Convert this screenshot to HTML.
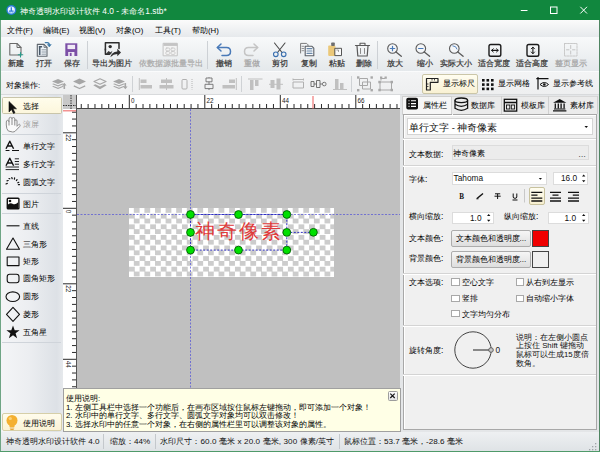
<!DOCTYPE html>
<html><head><meta charset="utf-8"><style>
*{margin:0;padding:0;box-sizing:border-box}
body{width:600px;height:452px;overflow:hidden;position:relative;background:#f0f0f0;font-family:"Liberation Sans",sans-serif;font-size:7.8px;color:#000;font-weight:normal}
.tb{font-weight:bold;color:#4a4a4a}
.a{position:absolute}
.t{position:absolute;white-space:nowrap;line-height:10px;height:10px}
svg{position:absolute;overflow:visible}
</style></head><body>
<!-- title bar -->
<div class="a" style="left:0;top:0;width:600px;height:20px;background:#11873e"></div>

<div class="t" style="left:20px;top:5.5px;color:#fff;font-size:8.35px;font-weight:normal">神奇透明水印设计软件 4.0 - 未命名1.stb*</div>
<svg width="600" height="452" style="left:0;top:0" fill="none">
 <circle cx="11.3" cy="10" r="5" fill="#2a7ad8"/>
 <circle cx="11.3" cy="10" r="3.6" fill="#eaf6ff"/>
 <path d="M11.3 7.2 V10.5 M9 11.2 H13.6" stroke="#2a7ad8" stroke-width="1.3"/>
 <path d="M8.5 12 Q11.3 14 14.1 12" stroke="#7ab8f0" stroke-width="0.8"/>
 <path d="M520.8 10.5 H527.5" stroke="#fff" stroke-width="1"/>
 <rect x="550.5" y="7" width="6.5" height="6.5" stroke="#fff" stroke-width="1"/>
 <path d="M580.3 6.8 L587 13.5 M587 6.8 L580.3 13.5" stroke="#fff" stroke-width="1"/>
</svg>
<!-- window frame -->
<div class="a" style="left:0;top:20px;width:1px;height:432px;background:#6fa585"></div>
<div class="a" style="left:599px;top:20px;width:1px;height:432px;background:#4f8562"></div>
<div class="a" style="left:0;top:451px;width:600px;height:1px;background:#4f9a6a"></div>
<!-- menu bar -->
<div class="a" style="left:1px;top:20px;width:598px;height:17px;background:linear-gradient(#fbfbfb,#e6e9ec)"></div>
<div class="t" style="left:7px;top:25.5px;font-weight:normal;color:#000">文件(F)</div>
<div class="t" style="left:43px;top:25.5px;font-weight:normal;color:#000">编辑(E)</div>
<div class="t" style="left:79px;top:25.5px;font-weight:normal;color:#000">视图(V)</div>
<div class="t" style="left:116px;top:25.5px;font-weight:normal;color:#000">对象(O)</div>
<div class="t" style="left:155px;top:25.5px;font-weight:normal;color:#000">工具(T)</div>
<div class="t" style="left:192px;top:25.5px;font-weight:normal;color:#000">帮助(H)</div>
<!-- toolbar -->
<div class="a" style="left:1px;top:37px;width:598px;height:34px;background:linear-gradient(#f8f9fa,#e4e8eb)"></div>
<div class="a" style="left:1px;top:71px;width:598px;height:1px;background:#fafbfc"></div>

<!-- toolbar labels -->
<div class="t tb" style="left:8px;top:59px">新建</div>
<div class="t tb" style="left:36px;top:59px">打开</div>
<div class="t tb" style="left:64px;top:59px">保存</div>
<div class="t tb" style="left:92px;top:59px">导出为图片</div>
<div class="t tb" style="left:138.5px;top:59px;color:#b0b0b0">依数据源批量导出</div>
<div class="t tb" style="left:215.5px;top:59px">撤销</div>
<div class="t tb" style="left:243.5px;top:59px;color:#a8a8a8">重做</div>
<div class="t tb" style="left:272px;top:59px">剪切</div>
<div class="t tb" style="left:300.5px;top:59px">复制</div>
<div class="t tb" style="left:328.5px;top:59px">粘贴</div>
<div class="t tb" style="left:355.5px;top:59px">删除</div>
<div class="t tb" style="left:386.5px;top:59px">放大</div>
<div class="t tb" style="left:417px;top:59px">缩小</div>
<div class="t tb" style="left:440px;top:59px">实际大小</div>
<div class="t tb" style="left:478px;top:59px">适合宽度</div>
<div class="t tb" style="left:515.5px;top:59px">适合高度</div>
<div class="t tb" style="left:555px;top:59px;color:#a8a8a8">整页显示</div>
<div class="a" style="left:87px;top:41px;width:1px;height:28px;background:#cdd1d5"></div>
<div class="a" style="left:207px;top:41px;width:1px;height:28px;background:#cdd1d5"></div>
<div class="a" style="left:377px;top:41px;width:1px;height:28px;background:#cdd1d5"></div>
<svg width="600" height="452" style="left:0;top:0" fill="none" stroke-linejoin="round" stroke-linecap="round">
 <!-- new -->
 <path d="M9.8 43.5 H17 L21 47.5 V55 H9.8 Z" stroke="#6a6a6a" stroke-width="1.1"/>
 <path d="M17 43.5 V47.5 H21" stroke="#6a6a6a" stroke-width="1"/>
 <path d="M20.5 52.5 V57 M18.3 54.8 H22.8" stroke="#2a9a8a" stroke-width="1.1"/>
 <!-- open -->
 <path d="M37.3 44.4 H44 L47 47.4 V56.3 H37.3 Z" stroke="#5f666d" stroke-width="1.1" fill="#eef3f8"/>
 <path d="M44 44.4 V47.4 H47" stroke="#5f666d" stroke-width="0.8"/>
 <rect x="38.9" y="46" width="1.6" height="9" fill="#4a5a6a"/>
 <rect x="38.9" y="46" width="3.2" height="1.5" fill="#4a5a6a"/>
 <path d="M42 49.8 H45.8 M42 52 H45.8 M42 54.2 H45.8" stroke="#7a8590" stroke-width="0.8"/>
 <path d="M45.3 42.6 H47.3 Q49.3 42.6 49.3 45" stroke="#3d78a8" stroke-width="1.3"/>
 <path d="M47.6 44.8 L49.3 46.9 L51 44.8 Z" fill="#3d78a8" stroke="#3d78a8" stroke-width="0.6"/>
 <!-- save -->
 <path d="M65.3 43.3 H77.3 V56 H65.3 Z" fill="#7b4fa6"/>
 <rect x="67.5" y="44.8" width="7.6" height="4.3" fill="#f0eaf5"/>
 <rect x="68.2" y="52" width="6.2" height="4" fill="#f0eaf5"/>
 <rect x="69.8" y="52.8" width="1.8" height="3.2" fill="#7b4fa6"/>
 <!-- export image -->
 <path d="M105.4 50 V42.8 H119 V48.5" stroke="#2e2e2e" stroke-width="1.5"/>
 <path d="M105.4 49 V54.3 H109.5" stroke="#2e2e2e" stroke-width="1.5"/>
 <circle cx="110.2" cy="46.6" r="1.7" fill="#2e2e2e"/>
 <path d="M105.8 54 L108.5 51 L110.5 52.2 L112.5 50.8 L111 54.3 Z" fill="#3a3a3a"/>
 <path d="M110.3 57.3 Q111.5 51.8 117.3 51.4 V48.8 L121 52.5 L117.3 56.2 V54 Q113.5 54 110.3 57.3 Z" fill="#2e2e2e"/>
 <!-- batch export disabled -->
 <rect x="163.5" y="43.3" width="13.8" height="12.5" stroke="#c4c4c4" stroke-width="1" fill="#f4f4f4"/>
 <rect x="163.5" y="43.3" width="13.8" height="2.6" fill="#c4c4c4"/>
 <g stroke="#c4c4c4" stroke-width="0.8" fill="none">
  <rect x="165.8" y="48" width="4" height="2.8" rx="1"/><rect x="171" y="48" width="4" height="2.8" rx="1"/>
  <rect x="165.8" y="51.6" width="4" height="2.8" rx="1"/><rect x="171" y="51.6" width="4" height="2.8" rx="1"/>
 </g>
 <!-- undo -->
 <path d="M217.5 47.5 H226.5 Q230.5 47.5 230.5 51.5 Q230.5 55.5 226.5 55.5 H222" stroke="#4a7ab8" stroke-width="1.5"/>
 <path d="M221 44 L217.3 47.5 L221 51" stroke="#4a7ab8" stroke-width="1.5"/>
 <!-- redo disabled -->
 <path d="M257.5 47.5 H248.5 Q244.5 47.5 244.5 51.5 Q244.5 55.5 248.5 55.5 H253" stroke="#c4c4c4" stroke-width="1.5"/>
 <path d="M254 44 L257.7 47.5 L254 51" stroke="#c4c4c4" stroke-width="1.5"/>
 <!-- scissors -->
 <path d="M274.5 43 L282 52.5 M285 43 L277.5 52.5" stroke="#4a4a4a" stroke-width="1.1"/>
 <circle cx="275.8" cy="54.3" r="2.3" stroke="#3a70b0" stroke-width="1.1"/>
 <circle cx="283.7" cy="54.3" r="2.3" stroke="#3a70b0" stroke-width="1.1"/>
 <!-- copy -->
 <path d="M300.6 53 V43.4 H306.6 L308 44.8 V45.8" stroke="#7a7a7a" stroke-width="1"/>
 <path d="M302 46.3 H303.8 M302 48.5 H303.8 M302 50.7 H303.8" stroke="#8a8a8a" stroke-width="0.9"/>
 <path d="M305.2 46.3 H312 L313.8 48.1 V55.8 H305.2 Z" stroke="#5a5f66" stroke-width="1.1" fill="#f6f8fa"/>
 <path d="M307 48.6 H312 M307 51 H312 M307 53.4 H312" stroke="#6a88a8" stroke-width="1.1"/>
 <!-- paste -->
 <rect x="328.2" y="45.6" width="7.2" height="10.3" rx="0.8" fill="#ebc879"/>
 <rect x="331.2" y="42.6" width="3.6" height="3.3" rx="0.6" fill="#6e6e6e"/>
 <path d="M335.2 48.3 H341.5 V55.6 H335.2 Z" fill="#fafafa" stroke="#555" stroke-width="1"/>
 <path d="M336.8 50 H338.5 V51.5" stroke="#888" stroke-width="0.8"/>
 <!-- delete -->
 <path d="M355.5 45.5 H369.5" stroke="#5a5a5a" stroke-width="1.2"/>
 <path d="M360 45.5 V43.3 H365 V45.5" stroke="#5a5a5a" stroke-width="1.1"/>
 <path d="M357 46 L357.8 56 H367.2 L368 46" stroke="#5a5a5a" stroke-width="1.2"/>
 <path d="M360.5 48.5 V53.5 M364.5 48.5 V53.5" stroke="#8a8a8a" stroke-width="1"/>
 <!-- zoom in -->
 <circle cx="392.5" cy="48.5" r="4.8" stroke="#5a5a5a" stroke-width="1.1" fill="#f4f6f8"/>
 <path d="M396 52 L401.3 56.3" stroke="#5a5a5a" stroke-width="1.3"/>
 <path d="M390.3 48.5 H394.7 M392.5 46.3 V50.7" stroke="#4a7ab8" stroke-width="1.2"/>
 <!-- zoom out -->
 <circle cx="420.8" cy="48.5" r="4.8" stroke="#5a5a5a" stroke-width="1.1" fill="#f4f6f8"/>
 <path d="M424.3 52 L429.6 56.3" stroke="#5a5a5a" stroke-width="1.3"/>
 <path d="M418.6 48.5 H423" stroke="#4a7ab8" stroke-width="1.2"/>
 <!-- actual -->
 <circle cx="454.3" cy="48.5" r="4.8" stroke="#5a5a5a" stroke-width="1.1" fill="#f4f6f8"/>
 <path d="M457.8 52 L463.1 56.3" stroke="#5a5a5a" stroke-width="1.3"/>
 <path d="M452.8 45.8 Q456.5 46 457 49" stroke="#4a7ab8" stroke-width="0.9"/>
 <!-- fit width -->
 <rect x="489" y="44.5" width="11.8" height="11.8" rx="1.8" stroke="#1a1a1a" stroke-width="1.4"/>
 <path d="M491.8 50.4 H498" stroke="#1a1a1a" stroke-width="1.1"/>
 <path d="M493.3 48.8 L491.6 50.4 L493.3 52 M496.5 48.8 L498.2 50.4 L496.5 52" stroke="#1a1a1a" stroke-width="1"/>
 <!-- fit height -->
 <rect x="527" y="44.5" width="11.8" height="11.8" rx="1.8" stroke="#1a1a1a" stroke-width="1.4"/>
 <path d="M532.9 47.3 V53.5" stroke="#1a1a1a" stroke-width="1.1"/>
 <path d="M531.3 48.8 L532.9 47.1 L534.5 48.8 M531.3 52 L532.9 53.7 L534.5 52" stroke="#1a1a1a" stroke-width="1"/>
 <!-- full page disabled -->
 <rect x="564.5" y="43.5" width="12.5" height="12.5" stroke="#c8c8c8" stroke-width="1" stroke-dasharray="2 1"/>
 <path d="M570.7 45.5 V48.5 M570.7 51 V54 M566.5 49.8 H569 M572.5 49.8 H575" stroke="#c0c0c0" stroke-width="0.9"/>
</svg>

<!-- obj ops bar -->
<div class="a" style="left:1px;top:72px;width:598px;height:22px;background:linear-gradient(#f3f4f5,#eeeff0)"></div>
<div class="a" style="left:1px;top:93.5px;width:598px;height:1.5px;background:#d8dadc"></div>
<div class="t" style="left:6px;top:81px;font-weight:normal;color:#000">对象操作:</div>

<div class="a" style="left:132px;top:76px;width:1px;height:16px;background:#cfd2d5"></div>
<div class="a" style="left:241px;top:76px;width:1px;height:16px;background:#cfd2d5"></div>
<div class="a" style="left:351px;top:76px;width:1px;height:16px;background:#cfd2d5"></div>
<div class="a" style="left:421.5px;top:74px;width:56px;height:20px;border:1px solid #cbc6a8;border-radius:2px;background:linear-gradient(#fffdf0,#f9f1d3)"></div>
<div class="t" style="left:442.5px;top:79px;font-weight:normal;color:#000">显示标尺</div>
<div class="t" style="left:498px;top:79px;font-weight:normal;color:#000">显示网格</div>
<div class="t" style="left:553px;top:79px;font-weight:normal;color:#000">显示参考线</div>
<svg width="600" height="452" style="left:0;top:0" fill="none" stroke-linejoin="round">
 <!-- layer icons -->
 <g fill="#a6a6a6" stroke="none">
  <path d="M52 81.5 L58 79 L64 81.5 L58 84 Z"/>
  <path d="M52 84 L53.5 83.4 L58 85.3 L62.5 83.4 L64 84 L58 86.5 Z"/>
  <path d="M52 86.5 L53.5 85.9 L58 87.8 L62.5 85.9 L64 86.5 L58 89 Z"/>
  <path d="M63.5 89 V85.5 H62 L64.3 82.8 L66.6 85.5 H65.1 V89 Z"/>
  <path d="M73 81.5 L79.5 78.5 L86 81.5 L79.5 84.5 Z"/>
  <path d="M93.3 85.3 L95.3 84.3 L100 86.6 L104.7 84.3 L106.7 85.3 L100 89.3 Z"/>
  <path d="M113 81.5 L119 79 L125 81.5 L119 84 Z"/>
  <path d="M113 84 L114.5 83.4 L119 85.3 L123.5 83.4 L125 84 L119 86.5 Z"/>
  <path d="M113 86.5 L114.5 85.9 L119 87.8 L123.5 85.9 L125 86.5 L119 89 Z"/>
  <path d="M124.5 83 V86.5 H123 L125.3 89.2 L127.6 86.5 H126.1 V83 Z"/>
 </g>
 <path d="M73.8 85.8 L79.5 88.5 L85.2 85.8" stroke="#a6a6a6" stroke-width="1.3"/>
 <path d="M94 81.5 L100 78.8 L106 81.5 L100 84.2 Z" stroke="#a6a6a6" stroke-width="1.2"/>
 <!-- align icons -->
 <g fill="#c0c0c0" stroke="none">
  <rect x="138.8" y="78" width="1" height="12"/>
  <rect x="140.5" y="79.5" width="6" height="3.5"/>
  <rect x="140.5" y="85" width="11.5" height="3.5"/>
  <rect x="166" y="78" width="1" height="12"/>
  <rect x="161" y="79.5" width="11" height="3.5"/>
  <rect x="159.5" y="85" width="14" height="3.5"/>
  <rect x="235.8" y="78" width="1" height="12"/>
  <rect x="229" y="79.5" width="6" height="3.5"/>
  <rect x="222.5" y="85" width="12.5" height="3.5"/>
  <rect x="248" y="78.5" width="14.5" height="1"/>
  <rect x="250" y="80" width="3.5" height="10"/>
  <rect x="255" y="80" width="3.5" height="6"/>
  <rect x="269" y="83.8" width="14" height="1"/>
  <rect x="270.5" y="80" width="4" height="8"/>
  <rect x="276.5" y="78.5" width="4" height="11"/>
  <rect x="333" y="89" width="14" height="1"/>
  <rect x="335" y="79" width="3.5" height="10"/>
  <rect x="340" y="83" width="3.5" height="6"/>
 </g>
 <rect x="182" y="79.5" width="5" height="9.5" rx="1" stroke="#b0b0b0" stroke-width="1"/>
 <path d="M192 79 V89.5" stroke="#b4b4b4" stroke-width="1" stroke-dasharray="1 1"/>
 <rect x="206" y="78" width="6" height="3.8" stroke="#707070" stroke-width="0.9"/>
 <rect x="205" y="84.3" width="8" height="4.3" stroke="#707070" stroke-width="0.9"/>
 <path d="M209 81.8 V84.3 M209 77.3 V78 M209 88.6 V90" stroke="#707070" stroke-width="0.9"/>
 <rect x="293" y="82" width="10.5" height="6" stroke="#b0b0b0" stroke-width="1"/>
 <path d="M293 79.5 H303.5 M293 78.5 V80.5 M303.5 78.5 V80.5" stroke="#b0b0b0" stroke-width="0.9"/>
 <rect x="311" y="81.5" width="3" height="5" stroke="#666" stroke-width="0.9"/>
 <rect x="316.5" y="80.5" width="3.5" height="7" stroke="#666" stroke-width="0.9"/>
 <rect x="322.5" y="82.3" width="3.5" height="3.5" rx="1.5" stroke="#666" stroke-width="0.9"/>
 <path d="M314 84 H316.5 M320 84 H322.5" stroke="#666" stroke-width="0.9"/>
 <g stroke="#a8a8a8" stroke-width="1" fill="none">
  <rect x="359.5" y="78.5" width="8" height="7"/>
  <rect x="362.5" y="82" width="8" height="7"/>
  <path d="M381 80.5 V78.5 H385 M380 82 H391.5 V90 H380 Z"/>
 </g>
 <g fill="#a8a8a8">
  <rect x="357" y="76.3" width="2.4" height="2.4"/><rect x="370.5" y="76.3" width="2.4" height="2.4"/><rect x="357" y="89" width="2.4" height="2.4"/><rect x="370.5" y="89" width="2.4" height="2.4"/>
  <rect x="378.3" y="80.8" width="2.5" height="2.5"/><rect x="390.5" y="80.8" width="2.5" height="2.5"/><rect x="378.3" y="88.8" width="2.5" height="2.5"/><rect x="390.5" y="88.8" width="2.5" height="2.5"/>
  <rect x="380" y="76.5" width="2.3" height="2.3"/><rect x="384.5" y="76.5" width="2.3" height="2.3"/>
 </g>
 <!-- ruler toggle icon -->
 <path d="M426.5 78.5 H438 V82.3 H430.3 V90 H426.5 Z" stroke="#222" stroke-width="1.2"/>
 <path d="M432 78.8 V80.5 M434.5 78.8 V80.5 M426.8 84 H428.5 M426.8 86.5 H428.5" stroke="#222" stroke-width="0.8"/>
 <!-- grid icon -->
 <g fill="#111">
  <rect x="482" y="79" width="2.6" height="2.6"/><rect x="486.5" y="79" width="2.6" height="2.6"/><rect x="491" y="79" width="2.6" height="2.6"/>
  <rect x="482" y="83.3" width="2.6" height="2.6"/><rect x="486.5" y="83.3" width="2.6" height="2.6"/><rect x="491" y="83.3" width="2.6" height="2.6"/>
  <rect x="482" y="87.6" width="2.6" height="2.6"/><rect x="486.5" y="87.6" width="2.6" height="2.6"/><rect x="491" y="87.6" width="2.6" height="2.6"/>
 </g>
 <!-- guide icon -->
 <path d="M538 77 V89.5 M536.3 78.7 H548.5" stroke="#111" stroke-width="1.2"/>
 <path d="M540 84.5 Q544.3 80.5 548.5 84.5 Q544.3 88.5 540 84.5 Z" stroke="#111" stroke-width="1"/>
 <circle cx="544.3" cy="84.5" r="1.3" fill="#111"/>
</svg>

<!-- left panel -->
<div class="a" style="left:1px;top:95px;width:62px;height:337px;background:linear-gradient(90deg,#f4f5f7 0%,#eceef1 45%,#dde1e6 90%,#e6e9ec 100%)"></div>
<div class="a" style="left:2px;top:96.8px;width:59.5px;height:17.5px;border:1px solid #c9c5aa;border-radius:1.5px;background:linear-gradient(#fffdec,#fcf6dc)"></div>
<div class="a" style="left:2px;top:134px;width:59px;height:1px;background:#cfd4da"></div>
<div class="a" style="left:2px;top:192.5px;width:59px;height:1px;background:#cfd4da"></div>
<div class="a" style="left:2px;top:213px;width:59px;height:1px;background:#cfd4da"></div>
<div class="a" style="left:2px;top:342px;width:59px;height:1px;background:#cfd4da"></div>
<div class="t" style="left:23px;top:101.7px;font-weight:normal;color:#000">选择</div>
<div class="t" style="left:23px;top:119.7px;font-weight:normal;color:#a0a0a0">滚屏</div>
<div class="t" style="left:23px;top:141.7px;font-weight:normal;color:#000">单行文字</div>
<div class="t" style="left:23px;top:159.7px;font-weight:normal;color:#000">多行文字</div>
<div class="t" style="left:23px;top:177.7px;font-weight:normal;color:#000">圆弧文字</div>
<div class="t" style="left:23px;top:199.7px;font-weight:normal;color:#000">图片</div>
<div class="t" style="left:23px;top:221.7px;font-weight:normal;color:#000">直线</div>
<div class="t" style="left:23px;top:239.7px;font-weight:normal;color:#000">三角形</div>
<div class="t" style="left:23px;top:257.2px;font-weight:normal;color:#000">矩形</div>
<div class="t" style="left:23px;top:274.2px;font-weight:normal;color:#000">圆角矩形</div>
<div class="t" style="left:23px;top:292.2px;font-weight:normal;color:#000">圆形</div>
<div class="t" style="left:23px;top:310.2px;font-weight:normal;color:#000">菱形</div>
<div class="t" style="left:23px;top:327.7px;font-weight:normal;color:#000">五角星</div>
<div class="a" style="left:2px;top:413px;width:59.5px;height:18px;border:1px solid #d6cfa8;border-radius:2px;background:linear-gradient(#fffcec,#fbf3d6)"></div>
<div class="t" style="left:23px;top:418.7px;font-weight:normal;color:#000">使用说明</div>
<svg width="600" height="452" style="left:0;top:0" fill="none" stroke-linejoin="round">
 <path d="M9 101.5 V112 L11.5 109.5 L13.5 113.5 L15 112.8 L13 108.8 L16.5 108.8 Z" fill="#111" stroke="#111" stroke-width="0.6"/>
 <path d="M8.3 131 Q6.3 129 6.3 125 V122 Q6.3 120.3 7.7 120.3 Q9 120.3 9 122 V119 Q9 117.3 10.5 117.3 Q12 117.3 12 119 V118.8 Q12 117.5 13.4 117.5 Q14.8 117.5 14.8 119 V121 Q14.8 119.8 15.9 119.8 Q17 119.8 17 121 V126.3 L18.6 124.6 Q19.5 123.8 20.1 124.8 Q20.3 125.6 19.6 126.6 L15.2 131.2 Q14.2 132 12.6 132 Z M9 122 V125.5 M12 119 V125 M14.8 121 V125.5" stroke="#8c8c8c" stroke-width="1" fill="#fafafa"/>
 <path d="M6 148.8 L9.8 141.2 L13.6 148.8 M7.4 146 H12.2" stroke="#111" stroke-width="1.4"/>
 <path d="M5.6 150.5 H9.5 M12 150.5 H19" stroke="#111" stroke-width="1.1"/>
 <path d="M6 165.8 L9.8 158.2 L13.6 165.8 M7.4 163 H12.2" stroke="#111" stroke-width="1.4"/>
 <path d="M14.8 158.8 H19 M14.8 161.5 H19 M14.8 164.2 H19 M5.6 167 H19 M5.6 169.6 H19" stroke="#111" stroke-width="0.9"/>
 <g stroke="#111" stroke-width="1.2" stroke-linecap="round">
  <path d="M6 184 L7.3 183.4 M7 180.8 L8.2 180.5 M9 178.5 L9.8 178.8 M11.8 177.5 L12.2 178.7 M14.6 177.9 L14.4 179.1 M17 179.6 L16.4 180.6 M18.8 182.3 L17.8 182.8 M19.5 184.6 L18.4 184.7"/>
 </g>
 <rect x="6.6" y="197.6" width="13" height="11.8" rx="1.5" fill="#111"/>
 <rect x="8" y="199" width="10.2" height="9" fill="#fff"/>
 <circle cx="10" cy="201" r="1.3" fill="#111"/>
 <path d="M8 204.5 Q10.5 202.5 13 204 Q15.5 205 18.2 202.3 V208 H8 Z" fill="#111"/>
 <path d="M6.5 225.8 H19.5" stroke="#111" stroke-width="1.1"/>
 <path d="M13 238 L19.5 249.3 H6.5 Z" stroke="#111" stroke-width="1.1"/>
 <rect x="7.2" y="257" width="11.8" height="8.6" stroke="#111" stroke-width="1.1"/>
 <rect x="7.2" y="274.2" width="11.8" height="8.6" rx="2.5" stroke="#111" stroke-width="1.1"/>
 <ellipse cx="12.8" cy="296.7" rx="6.8" ry="4.8" stroke="#111" stroke-width="1.1"/>
 <path d="M13 307.3 L19.5 314.3 L13 321.3 L6.5 314.3 Z" stroke="#111" stroke-width="1.1"/>
 <path d="M13 325.5 L14.7 330.3 L19.6 330.3 L15.6 333.3 L17.1 338.3 L13 335.2 L8.9 338.3 L10.4 333.3 L6.4 330.3 L11.3 330.3 Z" fill="#111"/>
 <!-- bulb -->
 <circle cx="12" cy="420.5" r="5.5" fill="#f4b030"/>
 <path d="M9.5 424 H14.5 V427 H9.5 Z" fill="#f4b030"/>
 <path d="M9.8 428 H14.2 M10.3 429.5 H13.7" stroke="#e8a838" stroke-width="1"/>
 <circle cx="10.3" cy="418.5" r="1.6" fill="#fbd27a"/>
</svg>
<!-- rulers -->
<div class="a" style="left:63px;top:95px;width:337px;height:14px;background:#fff"></div>
<div class="a" style="left:63px;top:109px;width:14px;height:279px;background:#fff"></div>
<div class="a" style="left:63px;top:95px;width:14px;height:14px;background:#c8c8c8"></div>
<div class="a" style="left:77px;top:109px;width:323px;height:279px;background:#c0c0c0"></div>
<div class="a" style="left:128.8px;top:208px;width:205.7px;height:68.5px;background:repeating-conic-gradient(#cccccc 0 25%,#ffffff 0 50%) 0 0/10.6px 10.6px"></div>
<svg width="600" height="452" style="left:0;top:0">
<path d="M81.25 104 V109 M88.12 104 V109 M94.98 104 V109 M101.85 104 V109 M108.71 104 V109 M115.57 104 V109 M122.44 104 V109 M129.30 95 V109 M136.16 104 V109 M143.03 104 V109 M149.89 104 V109 M156.75 104 V109 M163.62 104 V109 M170.48 104 V109 M177.35 104 V109 M184.21 104 V109 M191.07 104 V109 M197.94 104 V109 M204.80 95 V109 M211.66 104 V109 M218.53 104 V109 M225.39 104 V109 M232.25 104 V109 M239.12 104 V109 M245.98 104 V109 M252.85 104 V109 M259.71 104 V109 M266.57 104 V109 M273.44 104 V109 M280.30 95 V109 M287.16 104 V109 M294.03 104 V109 M300.89 104 V109 M307.75 104 V109 M314.62 104 V109 M321.48 104 V109 M328.35 104 V109 M335.21 104 V109 M342.07 104 V109 M348.94 104 V109 M355.80 95 V109 M362.66 104 V109 M369.53 104 V109 M376.39 104 V109 M383.25 104 V109 M390.12 104 V109 M396.98 104 V109" stroke="#2a2a2a" stroke-width="1" fill="none"/>
<path d="M76 108.5 H400" stroke="#444" stroke-width="1"/>
<text x="131.10" y="103" font-size="6.3" font-family="Liberation Sans" font-weight="normal" fill="#222">0</text>
<text x="206.60" y="103" font-size="6.3" font-family="Liberation Sans" font-weight="normal" fill="#222">22</text>
<text x="282.10" y="103" font-size="6.3" font-family="Liberation Sans" font-weight="normal" fill="#222">44</text>
<text x="357.60" y="103" font-size="6.3" font-family="Liberation Sans" font-weight="normal" fill="#222">66</text>
<path d="M313 96 V108.5" stroke="#f07878" stroke-width="1.2"/>
<path d="M72 112.21 H77 M72 119.07 H77 M72 125.94 H77 M63 132.80 H77 M72 139.66 H77 M72 146.53 H77 M72 153.39 H77 M72 160.25 H77 M72 167.12 H77 M72 173.98 H77 M72 180.85 H77 M72 187.71 H77 M72 194.57 H77 M72 201.44 H77 M63 208.30 H77 M72 215.16 H77 M72 222.03 H77 M72 228.89 H77 M72 235.75 H77 M72 242.62 H77 M72 249.48 H77 M72 256.35 H77 M72 263.21 H77 M72 270.07 H77 M72 276.94 H77 M63 283.80 H77 M72 290.66 H77 M72 297.53 H77 M72 304.39 H77 M72 311.25 H77 M72 318.12 H77 M72 324.98 H77 M72 331.85 H77 M72 338.71 H77 M72 345.57 H77 M72 352.44 H77 M63 359.30 H77 M72 366.16 H77 M72 373.03 H77 M72 379.89 H77 M72 386.75 H77" stroke="#2a2a2a" stroke-width="1" fill="none"/>
<path d="M76.5 95 V388" stroke="#555" stroke-width="1"/>
<text transform="translate(65.5 134.30) rotate(90)" font-size="6.3" font-family="Liberation Sans" font-weight="normal" fill="#222">22</text>
<text transform="translate(65.5 209.80) rotate(90)" font-size="6.3" font-family="Liberation Sans" font-weight="normal" fill="#222">0</text>
<text transform="translate(65.5 285.30) rotate(90)" font-size="6.3" font-family="Liberation Sans" font-weight="normal" fill="#222">22</text>
<text transform="translate(65.5 360.80) rotate(90)" font-size="6.3" font-family="Liberation Sans" font-weight="normal" fill="#222">44</text>
<path d="M63 110.8 H76" stroke="#f07878" stroke-width="1.2"/>
<path d="M63 105.5 H76 M71 95 V109" stroke="#333" stroke-width="1" stroke-dasharray="1.5 1"/>
<path d="M77 214.5 H400" stroke="#5050d8" stroke-width="1" stroke-dasharray="2 1.5" opacity="0.7"/>
<path d="M190.5 109 V388" stroke="#5050d8" stroke-width="1" stroke-dasharray="2 1.5" opacity="0.7"/>
</svg>
<div class="t" style="left:195px;top:220px;height:22px;line-height:22px;font-family:'Liberation Serif',serif;font-size:20px;font-weight:300;color:#e03a3a;letter-spacing:2px">神奇像素</div>
<svg width="600" height="452" style="left:0;top:0">
<path d="M190.5 214.5 H286.8 V250.1 H190.5 Z M286.8 232.4 H313.4" stroke="#3030c0" stroke-width="1" stroke-dasharray="2 1.5" fill="none"/>
<circle cx="190.5" cy="214.5" r="3.9" fill="#00e000" stroke="#006000" stroke-width="0.9"/>
<circle cx="238.5" cy="214.5" r="3.9" fill="#00e000" stroke="#006000" stroke-width="0.9"/>
<circle cx="286.8" cy="214.5" r="3.9" fill="#00e000" stroke="#006000" stroke-width="0.9"/>
<circle cx="190.5" cy="232.4" r="3.9" fill="#00e000" stroke="#006000" stroke-width="0.9"/>
<circle cx="286.8" cy="232.4" r="3.9" fill="#00e000" stroke="#006000" stroke-width="0.9"/>
<circle cx="190.5" cy="250.1" r="3.9" fill="#00e000" stroke="#006000" stroke-width="0.9"/>
<circle cx="238.5" cy="250.1" r="3.9" fill="#00e000" stroke="#006000" stroke-width="0.9"/>
<circle cx="286.8" cy="250.1" r="3.9" fill="#00e000" stroke="#006000" stroke-width="0.9"/>
<circle cx="313.4" cy="232.3" r="3.9" fill="#00e000" stroke="#006000" stroke-width="0.9"/>
</svg>
<!-- right panel -->
<div class="a" style="left:400px;top:95px;width:199px;height:337px;background:#e4e6e8"></div>
<div class="a" style="left:451.5px;top:96px;width:145px;height:18px;background:#ebebeb;border-top:1px solid #d8d8d8"></div>
<div class="a" style="left:500.5px;top:96px;width:1px;height:18px;background:#d0d0d0"></div>
<div class="a" style="left:548px;top:96px;width:1px;height:18px;background:#d0d0d0"></div>
<div class="a" style="left:596.5px;top:96px;width:1px;height:18px;background:#d0d0d0"></div>
<div class="a" style="left:401.5px;top:96px;width:50px;height:19px;background:#f6f6f6;border:1px solid #d0d0d0;border-bottom:none"></div>
<div class="a" style="left:402.5px;top:114px;width:194.5px;height:315.5px;background:#f0f0f0;border:1px solid #a8a8a8;box-shadow:inset 1px 1px 0 #fff"></div>
<div class="a" style="left:451.5px;top:114px;width:1px;height:1px;background:#f6f6f6"></div>
<div class="t" style="left:423px;top:100.5px">属性栏</div>
<div class="t" style="left:471px;top:100.5px">数据库</div>
<div class="t" style="left:520.5px;top:100.5px">模板库</div>
<div class="t" style="left:570px;top:100.5px">素材库</div>
<svg width="600" height="452" style="left:0;top:0" fill="none">
 <rect x="406.3" y="97.8" width="11.7" height="11.7" rx="1.8" fill="#111"/>
 <path d="M408.5 100.8 H409.5 M411 100.8 H416 M408.5 103.6 H409.5 M411 103.6 H416 M408.5 106.4 H409.5 M411 106.4 H416" stroke="#fff" stroke-width="1.1"/>
 <ellipse cx="461.3" cy="100.3" rx="6.3" ry="2.3" stroke="#111" stroke-width="1.3"/>
 <path d="M455 100.3 V108.3 Q461.3 112.3 467.6 108.3 V100.3 M455 104.3 Q461.3 108.3 467.6 104.3" stroke="#111" stroke-width="1.3"/>
 <rect x="504.3" y="99.3" width="12.4" height="11.8" stroke="#111" stroke-width="1.3"/>
 <path d="M504.3 102.5 H516.7" stroke="#111" stroke-width="1.5"/>
 <rect x="506.5" y="105" width="3.3" height="4" stroke="#111" stroke-width="0.9"/>
 <rect x="511.3" y="105" width="3.3" height="4" stroke="#111" stroke-width="0.9"/>
 <path d="M553 102.8 L559.7 99 L566.4 102.8 Z" fill="#111"/>
 <path d="M553 110.8 H566.4 M554 109 H565.4" stroke="#111" stroke-width="1.2"/>
 <path d="M555.3 103.5 V108.5 M558.3 103.5 V108.5 M561.1 103.5 V108.5 M564.1 103.5 V108.5" stroke="#111" stroke-width="1.3"/>
</svg>
<!-- props -->
<div class="a" style="left:407px;top:118px;width:185.5px;height:17px;background:#fff;border:1px solid #d4d4d4"></div>
<div class="t" style="left:409px;top:122px;font-size:9.5px;height:12px;line-height:12px;font-weight:normal;color:#111">单行文字 - 神奇像素</div>
<svg width="600" height="452" style="left:0;top:0"><path d="M584.5 126 H588 L586.25 128 Z" fill="#111"/></svg>
<div class="a" style="left:403px;top:138px;width:193px;height:2px;border-top:1px solid #d4d4d4;border-bottom:1px solid #fff"></div>
<div class="t" style="left:409px;top:149.8px;font-size:8.2px">文本数据:</div>
<div class="a" style="left:451.5px;top:145px;width:137.5px;height:14.5px;background:#ececec;border:1px solid #dcdcdc"></div>
<div class="t" style="left:453px;top:149px">神奇像素</div>
<div class="t" style="left:578.5px;top:150px;letter-spacing:0.3px">...</div>
<div class="a" style="left:403px;top:165px;width:193px;height:2px;border-top:1px solid #d4d4d4;border-bottom:1px solid #fff"></div>
<div class="t" style="left:409px;top:174.8px;font-size:8.2px">字体:</div>
<div class="a" style="left:451.5px;top:171.5px;width:95px;height:13px;background:#fff;border:1px solid #dcdcdc"></div>
<div class="t" style="left:453.5px;top:173px;font-size:8.3px;font-weight:normal;color:#111">Tahoma</div>
<svg width="600" height="452" style="left:0;top:0"><path d="M538.8 178 H542 L540.4 179.8 Z" fill="#111"/></svg>
<div class="a" style="left:553px;top:171.5px;width:35px;height:13px;background:#fff;border:1px solid #dcdcdc"></div>
<div class="t" style="left:561px;top:173px;font-size:8.3px;font-weight:normal;color:#111">16.0</div>
<div class="a" style="left:528.5px;top:187px;width:16.5px;height:17.5px;border:1px solid #c8c29e;border-radius:2px;background:linear-gradient(#fffdf0,#f7efd0)"></div>
<div class="t" style="left:409px;top:212.3px;font-size:8.2px">横向缩放:</div>
<div class="a" style="left:451.5px;top:211.5px;width:42.5px;height:12px;background:#fff;border:1px solid #dcdcdc"></div>
<div class="t" style="left:470px;top:212.5px;font-size:8.3px;font-weight:normal;color:#111">1.0</div>
<div class="t" style="left:504px;top:212.3px;font-size:8.2px">纵向缩放:</div>
<div class="a" style="left:548px;top:211.5px;width:40.5px;height:12px;background:#fff;border:1px solid #dcdcdc"></div>
<div class="t" style="left:564.5px;top:212.5px;font-size:8.3px;font-weight:normal;color:#111">1.0</div>
<div class="t" style="left:409px;top:233.8px;font-size:8.2px">文本颜色:</div>
<div class="a" style="left:451px;top:230px;width:79.5px;height:17px;border:1px solid #acacac;border-radius:2px;background:linear-gradient(#f6f6f6,#dedede)"></div>
<div class="t" style="left:455.5px;top:234px;font-size:8.1px">文本颜色和透明度...</div>
<div class="a" style="left:532px;top:230px;width:17px;height:16.5px;background:#f00000;border:1px solid #444"></div>
<div class="t" style="left:409px;top:253.8px;font-size:8.2px">背景颜色:</div>
<div class="a" style="left:451px;top:251px;width:79.5px;height:17px;border:1px solid #acacac;border-radius:2px;background:linear-gradient(#f6f6f6,#dedede)"></div>
<div class="t" style="left:455.5px;top:255px;font-size:8.1px">背景颜色和透明度...</div>
<div class="a" style="left:532px;top:251px;width:17px;height:16.5px;background:#f0f0f0;border:1px solid #444"></div>
<div class="a" style="left:403px;top:272.5px;width:193px;height:2px;border-top:1px solid #d4d4d4;border-bottom:1px solid #fff"></div>
<div class="t" style="left:409px;top:277.8px;font-size:8.2px">文本选项:</div>
<div class="a" style="left:451.3px;top:278px;width:8.3px;height:7.8px;background:#fff;border:1px solid #a8a8a8"></div>
<div class="t" style="left:462px;top:278px">空心文字</div>
<div class="a" style="left:515.5px;top:278px;width:8.3px;height:7.8px;background:#fff;border:1px solid #a8a8a8"></div>
<div class="t" style="left:526px;top:278px">从右到左显示</div>
<div class="a" style="left:451.3px;top:294.5px;width:8.3px;height:7.8px;background:#fff;border:1px solid #a8a8a8"></div>
<div class="t" style="left:462px;top:294px">竖排</div>
<div class="a" style="left:515.5px;top:294.5px;width:8.3px;height:7.8px;background:#fff;border:1px solid #a8a8a8"></div>
<div class="t" style="left:526px;top:294px">自动缩小字体</div>
<div class="a" style="left:451.3px;top:309.5px;width:8.3px;height:7.8px;background:#fff;border:1px solid #a8a8a8"></div>
<div class="t" style="left:462px;top:310px">文字均匀分布</div>
<div class="a" style="left:403px;top:325px;width:193px;height:2px;border-top:1px solid #d4d4d4;border-bottom:1px solid #fff"></div>
<div class="t" style="left:409px;top:345.8px;font-size:8.2px">旋转角度:</div>
<svg width="600" height="452" style="left:0;top:0" fill="none">
 <circle cx="473" cy="350" r="18.2" stroke="#444" stroke-width="1"/>
 <path d="M473 350 H489" stroke="#333" stroke-width="1.1"/>
 <circle cx="491" cy="350" r="2.3" fill="#c8c8c8" stroke="#555" stroke-width="0.9"/>
 <text x="495.5" y="353" font-size="8.3" font-family="Liberation Sans" font-weight="normal" fill="#222">0</text>
</svg>
<div class="t" style="left:516px;top:333.5px;line-height:8.7px;height:36px;white-space:normal;width:80px;font-weight:normal;color:#111">说明：在左侧小圆点<br>上按住 Shift 键拖动<br>鼠标可以生成15度倍<br>数角。</div>
<div class="a" style="left:403px;top:374px;width:193px;height:2px;border-top:1px solid #d4d4d4;border-bottom:1px solid #fff"></div>

<svg width="600" height="452" style="left:0;top:0" fill="none">
 <text x="459.3" y="198.8" font-size="7.2" font-weight="bold" font-family="Liberation Serif" fill="#111">B</text>
 <path d="M477 198.5 L483 193.5" stroke="#111" stroke-width="1.4"/>
 <path d="M476.3 198.8 H478.5" stroke="#111" stroke-width="0.9"/>
 <path d="M495 193.8 H500.2 M497.6 193.8 V199 M494.5 196.2 H500.7" stroke="#111" stroke-width="1"/>
 <path d="M513.2 193.5 V197 Q513.2 198.3 515 198.3 Q516.8 198.3 516.8 197 V193.5 M512.5 200 H517.5" stroke="#111" stroke-width="1"/>
 <path d="M524.5 189 V202.5" stroke="#c8c8c8" stroke-width="1"/>
 <path d="M531.3 192.3 H542.3 M531.3 195.2 H537.5 M531.3 198.1 H542.3 M531.3 201 H542.3" stroke="#111" stroke-width="1.3"/>
 <path d="M550 192.3 H561 M552.5 195.2 H558.5 M550 198.1 H561 M550 201 H561" stroke="#111" stroke-width="1.3"/>
 <path d="M568 192.3 H579 M572.8 195.2 H579 M568 198.1 H579 M568 201 H579" stroke="#111" stroke-width="1.3"/>
 <g fill="#111">
  <path d="M582 176.5 L583.7 174.5 L585.4 176.5 Z M582 180.3 L583.7 182.3 L585.4 180.3 Z"/>
  <path d="M487 216 L488.7 214 L490.4 216 Z M487 219.8 L488.7 221.8 L490.4 219.8 Z"/>
  <path d="M582 216 L583.7 214 L585.4 216 Z M582 219.8 L583.7 221.8 L585.4 219.8 Z"/>
 </g>
</svg>
<!-- help box -->
<div class="a" style="left:63px;top:388px;width:338px;height:44px;background:#ffffe6;border:1px solid #a0a0a0"></div>
<div class="t" style="left:66px;top:393.5px;color:#000">使用说明:</div>
<div class="t" style="left:66px;top:402.5px;color:#000">1. 左侧工具栏中选择一个功能后，在画布区域按住鼠标左键拖动，即可添加一个对象！</div>
<div class="t" style="left:66px;top:411px;color:#000">2. 水印中的单行文字、多行文字、圆弧文字对象均可以双击修改！</div>
<div class="t" style="left:66px;top:420px;color:#000">3. 选择水印中的任意一个对象，在右侧的属性栏里可以调整该对象的属性。</div>
<div class="a" style="left:387.5px;top:391px;width:10px;height:9.5px;border:1px solid #9c9c9c;border-radius:1.5px;background:linear-gradient(#fcfcfc,#e4e4e4)"></div>
<svg width="600" height="452" style="left:0;top:0"><path d="M390.3 393.6 L394.7 398 M394.7 393.6 L390.3 398" stroke="#111" stroke-width="1.1"/></svg>
<!-- status bar -->
<div class="a" style="left:1px;top:432px;width:598px;height:19px;background:linear-gradient(#eef0f2,#dfe3e6)"></div>
<div class="t" style="left:6px;top:437.3px;font-size:8.1px;font-weight:normal;color:#111">神奇透明水印设计软件 4.0</div>
<div class="a" style="left:103px;top:434px;width:1px;height:15px;background:#c4c8cc"></div>
<div class="a" style="left:155px;top:434px;width:1px;height:15px;background:#c4c8cc"></div>
<div class="a" style="left:338.5px;top:434px;width:1px;height:15px;background:#c4c8cc"></div>
<div class="t" style="left:110px;top:437.3px;font-size:8.1px;font-weight:normal;color:#111">缩放：44%</div>
<svg width="600" height="452" style="left:0;top:0"><g fill="#a0a4a8"><rect x="595" y="446" width="1.3" height="1.3"/><rect x="595" y="449" width="1.3" height="1.3"/><rect x="592" y="449" width="1.3" height="1.3"/><rect x="589" y="449" width="1.3" height="1.3"/><rect x="592" y="446" width="1.3" height="1.3"/><rect x="595" y="443" width="1.3" height="1.3"/></g></svg>
<div class="t" style="left:160px;top:437.3px;font-size:8.1px;font-weight:normal;color:#111;letter-spacing:0.1px">水印尺寸：60.0 毫米 x 20.0 毫米, 300 像素/英寸</div>
<div class="t" style="left:344px;top:437.3px;font-size:8.1px;font-weight:normal;color:#111">鼠标位置：53.7 毫米，-28.6 毫米</div>
</body></html>
